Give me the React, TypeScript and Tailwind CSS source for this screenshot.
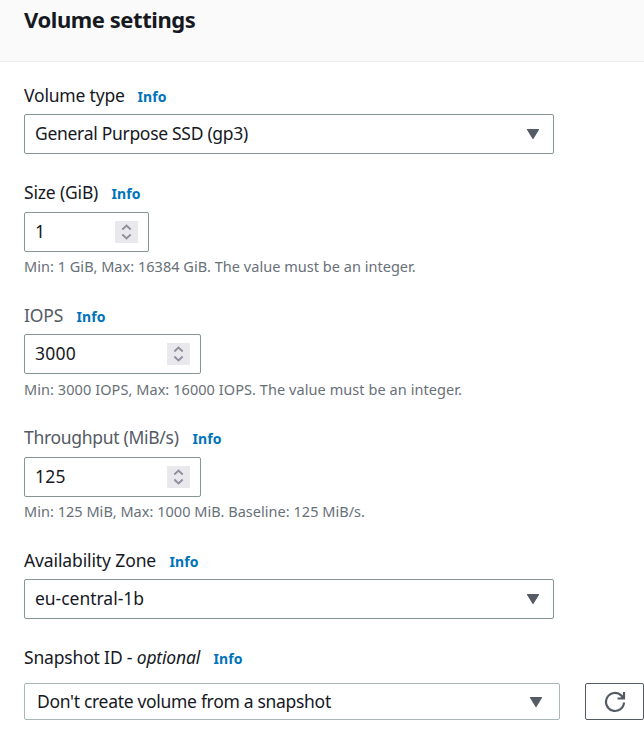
import type { ReactNode } from 'react';

function Info() {
  return <a href="#" className="ml-[0.5px] pt-0.5 text-[14px] leading-6 font-bold tracking-[0.1px] whitespace-nowrap text-[#0073bb]">Info</a>;
}

function Label({ children, className }: { children: ReactNode; className: string }) {
  return (
    <div className="flex h-6 items-center">
      <label className={`block shrink-0 pb-0.5 text-[17.5px] leading-6 whitespace-nowrap ${className}`}>{children}</label>
      <Info />
    </div>
  );
}

function Caret() {
  return (
    <svg width="14" height="12" viewBox="0 0 14 12" className="shrink-0">
      <path d="M1.5 1.5h11L7 10.5z" fill="#545b64" stroke="#545b64" strokeWidth="1.2" strokeLinejoin="round" />
    </svg>
  );
}

function Select({ children, className, textClass }: { children: ReactNode; className: string; textClass: string }) {
  return (
    <button type="button" className={`flex items-center justify-between rounded-[2px] border bg-white text-left ${className}`}>
      <span className={`pb-0.5 text-[17.5px] leading-6 whitespace-nowrap ${textClass}`}>{children}</span>
      <Caret />
    </button>
  );
}

function NumberBox({ value, className }: { value: string; className: string }) {
  return (
    <div className={`flex h-10 items-center justify-between rounded-[2px] border border-[#879596] pr-2.5 pl-2.5 ${className}`}>
      <span className="pb-0.5 text-[17.5px] leading-6 tracking-[0.2px]">{value}</span>
      <span className="flex h-[22px] w-[23px] items-center justify-center bg-[#e9e9ed]">
        <svg width="11" height="16" viewBox="0 0 11 16" fill="none" stroke="#8f8f9d" strokeWidth="1.9">
          <path d="M1.3 5.5 5.5 1.5l4.2 4M1.3 10.5l4.2 4 4.2-4" />
        </svg>
      </span>
    </div>
  );
}

function Hint({ children, className }: { children: ReactNode; className: string }) {
  return <p className={`pb-px text-[14.5px] leading-[18px] whitespace-nowrap text-[#687078] ${className}`}>{children}</p>;
}

export default function App() {
  return (
    <main className="h-[733px] w-[644px] overflow-hidden bg-white font-['Noto_Sans',sans-serif] text-[#16191f]">
      <header className="flex h-[62px] items-start border-b border-[#eaeded] bg-[#fafafa] pt-[3px] pl-6">
        <h2 className="text-[22px] leading-8 font-bold tracking-[-0.43px] whitespace-nowrap">Volume settings</h2>
      </header>
      <form className="pt-[22px] pl-6">
        <section>
          <Label className="w-[113px] tracking-[-0.18px]">Volume type</Label>
          <Select className="mt-1.5 h-10 w-[530px] border-[#879596] pr-[13px] pl-2.5" textClass="tracking-[-0.3px]">General Purpose SSD (gp3)</Select>
        </section>
        <section className="mt-[27px]">
          <Label className="w-[87px] tracking-[-0.17px]">Size (GiB)</Label>
          <NumberBox value="1" className="mt-[7px] w-[125px]" />
          <Hint className="mt-[5px] tracking-[0.03px]">Min: 1 GiB, Max: 16384 GiB. The value must be an integer.</Hint>
        </section>
        <section className="mt-7">
          <Label className="w-[52px] tracking-[-0.15px] text-[#545b64]">IOPS</Label>
          <NumberBox value="3000" className="mt-1.5 w-[177px]" />
          <Hint className="mt-1.5 tracking-[0.07px]">Min: 3000 IOPS, Max: 16000 IOPS. The value must be an integer.</Hint>
        </section>
        <section className="mt-[27px]">
          <Label className="w-[168px] tracking-[-0.3px] text-[#545b64]">Throughput (MiB/s)</Label>
          <NumberBox value="125" className="mt-[7px] w-[177px]" />
          <Hint className="mt-[5px] tracking-[0.03px]">Min: 125 MiB, Max: 1000 MiB. Baseline: 125 MiB/s.</Hint>
        </section>
        <section className="mt-7">
          <Label className="w-[145px] tracking-[-0.12px]">Availability Zone</Label>
          <Select className="mt-1.5 h-10 w-[530px] border-[#879596] pr-[13px] pl-2.5" textClass="tracking-[-0.03px]">eu-central-1b</Select>
        </section>
        <section className="mt-[27px]">
          <Label className="w-[189px] tracking-[-0.17px]">Snapshot ID - <i>optional</i></Label>
          <div className="mt-[13px] flex gap-[25px]">
            <Select className="h-[37px] w-[536px] shrink-0 border-[#aab7b8] pr-4 pl-3" textClass="tracking-[-0.31px]">Don't create volume from a snapshot</Select>
            <button type="button" className="flex h-[37px] w-[59px] shrink-0 items-center justify-center rounded-[2px] border border-[#545b64]">
              <svg width="22" height="22" viewBox="0 0 22 22" fill="none" stroke="#545b64" strokeWidth="2.2">
                <path d="M20 11.5a9 9 0 1 1-2.6-6.9L19.5 7M20 1v6.5h-6.5" />
                <path d="M20 4v3.5h-4z" fill="#545b64" stroke="none" />
              </svg>
            </button>
          </div>
        </section>
      </form>
    </main>
  );
}
